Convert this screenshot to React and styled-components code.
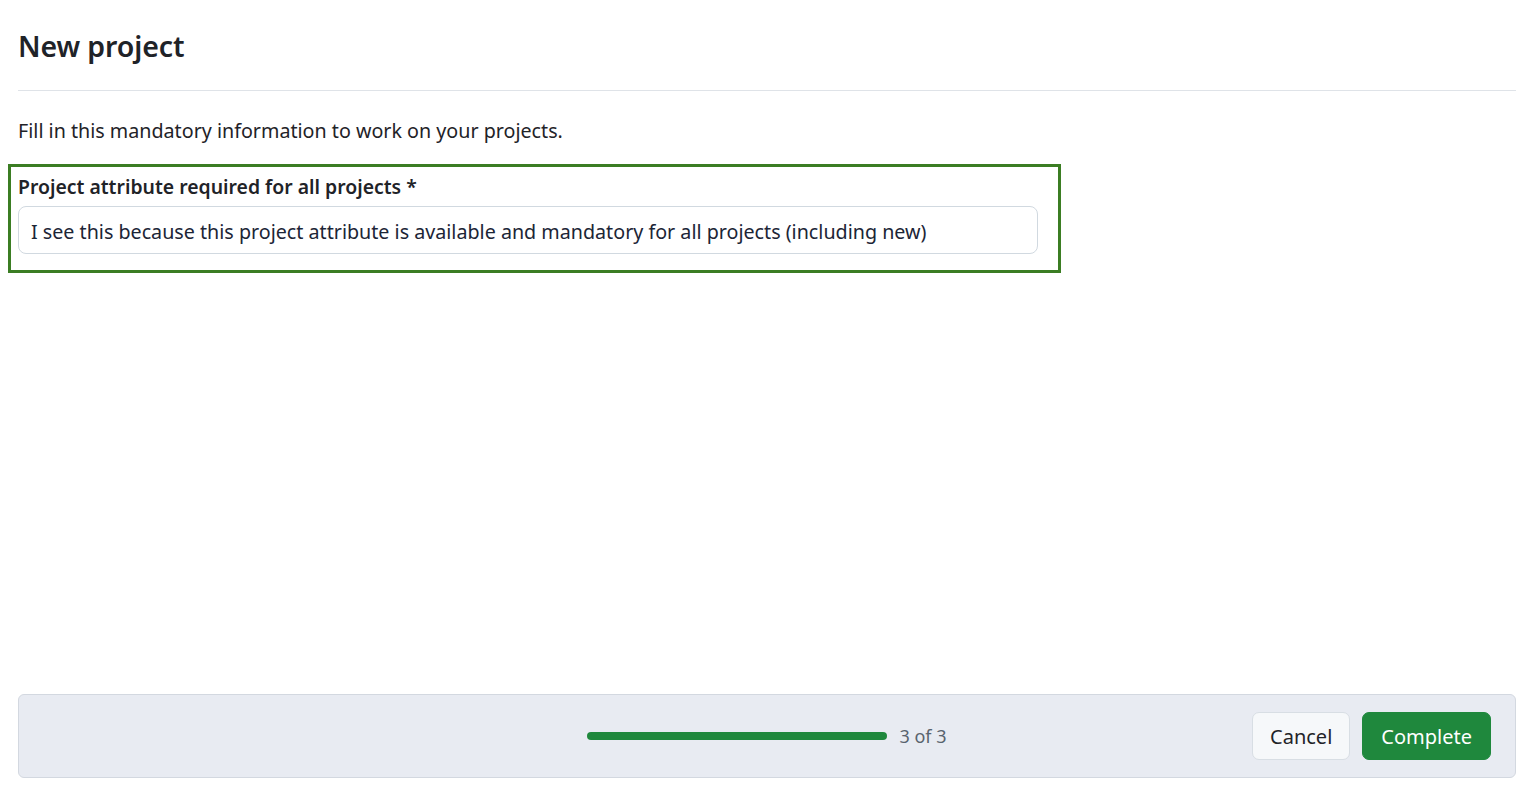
import React from "react";
import styled, { createGlobalStyle } from "styled-components";

const GlobalStyle = createGlobalStyle`
  html, body {
    margin: 0;
    padding: 0;
    background: #fff;
    font-family: "Noto Sans", "Open Sans", sans-serif;
    color: #1f2328;
  }
  * { box-sizing: border-box; }
`;

const Page = styled.div`
  height: 790px;
  display: flex;
  flex-direction: column;
  padding: 0 20px 12px 18px;
`;

const Header = styled.header`
  height: 91px;
  display: flex;
  align-items: center;
  padding-top: 2px;
  border-bottom: 1px solid #dfe3e8;
`;

const Title = styled.h1`
  margin: 0;
  font-size: 28.5px;
  font-weight: 600;
  letter-spacing: -0.1px;
`;

const Intro = styled.p`
  margin: 27px 0 20px;
  font-size: 19.7px;
  line-height: 26px;
`;

const Highlight = styled.div`
  width: 1053px;
  margin-left: -10px;
  border: 3px solid #3b7d23;
  padding: 7px 20px 16px 7px;
`;

const Label = styled.label`
  display: block;
  font-size: 19.4px;
  font-weight: 600;
  line-height: 26px;
  margin-bottom: 6px;
`;

const Input = styled.input`
  display: block;
  width: 1020px;
  height: 48px;
  padding: 2px 12px 0;
  font-family: inherit;
  font-size: 19.7px;
  color: #1c2536;
  border: 1px solid #d1d9e0;
  border-radius: 8px;
  background: #fff;
  outline: none;
`;

const Spacer = styled.div`
  flex: 1;
`;

const Footer = styled.footer`
  height: 84px;
  background: #e8ebf2;
  border: 1px solid #d3d8e0;
  border-radius: 6px;
  display: grid;
  grid-template-columns: 1fr auto 1fr;
  align-items: center;
  padding: 0 24px;
`;

const Progress = styled.div`
  display: flex;
  align-items: center;
  gap: 12px;
`;

const Track = styled.div`
  width: 300px;
  height: 8px;
  border-radius: 4px;
  background: #1f883d;
`;

const Count = styled.span`
  font-size: 18px;
  color: #59636e;
`;

const Actions = styled.div`
  display: flex;
  justify-content: flex-end;
  gap: 12px;
`;

const Button = styled.button`
  height: 48px;
  padding: 0 ${(p) => (p.primary ? "18px" : "17px")};
  font-family: inherit;
  font-size: 20px;
  border-radius: 7px;
  cursor: pointer;
  border: 1px solid ${(p) => (p.primary ? "#1f883d" : "#d8dee4")};
  background: ${(p) => (p.primary ? "#1f883d" : "#f6f8fa")};
  color: ${(p) => (p.primary ? "#fff" : "#1f2328")};
`;

export default function App() {
  return (
    <>
      <GlobalStyle />
      <Page>
        <Header>
          <Title>New project</Title>
        </Header>
        <Intro>Fill in this mandatory information to work on your projects.</Intro>
        <Highlight>
          <Label htmlFor="attr">Project attribute required for all projects *</Label>
          <Input
            id="attr"
            defaultValue="I see this because this project attribute is available and mandatory for all projects (including new)"
          />
        </Highlight>
        <Spacer />
        <Footer>
          <div />
          <Progress>
            <Track />
            <Count>3 of 3</Count>
          </Progress>
          <Actions>
            <Button>Cancel</Button>
            <Button primary>Complete</Button>
          </Actions>
        </Footer>
      </Page>
    </>
  );
}
